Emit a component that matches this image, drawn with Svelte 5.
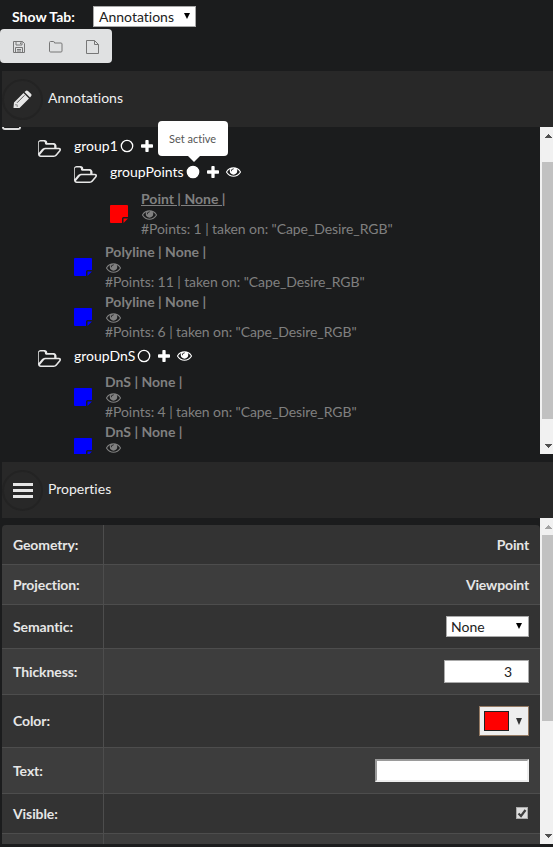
<script>
  const EYE = 'M1664 960q-152-236-381-353 61 104 61 225 0 185-131.500 316.500t-316.500 131.500-316.500-131.500-131.500-316.500q0-121 61-225-229 117-381 353 133 205 333.500 326.500t434.500 121.500 434.500-121.500 333.500-326.500zM944 576q0-20-14-34t-34-14q-125 0-214.500 89.500t-89.500 214.500q0 20 14 34t34 14 34-14 14-34q0-86 61-147t147-61q20 0 34-14t14-34zM1792 960q0 34-20 69-140 230-376.500 368.500t-499.500 138.500-499.500-139-376.500-368q-20-35-20-69t20-69q140-229 376.500-368t499.500-139 499.500 139 376.500 368q20 35 20 69z';
  const FOLDER = 'M1845 931q0-35-53-35h-1088q-40 0-85.500 21.500t-71.500 52.500l-294 363q-18 24-18 40 0 35 53 35h1088q40 0 86-22t71-53l294-363q18-22 18-39zM640 768h768v-160q0-40-28-68t-68-28h-576q-40 0-68-28t-28-68v-64q0-40-28-68t-68-28h-320q-40 0-68 28t-28 68v853l256-315q44-53 116-87.500t140-34.500zM1973 931q0 62-46 120l-295 363q-43 53-116 87.500t-140 34.500h-1088q-92 0-158-66t-66-158v-960q0-92 66-158t158-66h320q92 0 158 66t66 158v32h544q92 0 158 66t66 158v160h192q54 0 99 24.500t67 70.500q15 32 15 68z';
  const PLUS = 'M1600 736v192q0 40-28 68t-68 28h-416v416q0 40-28 68t-68 28h-192q-40 0-68-28t-28-68v-416h-416q-40 0-68-28t-28-68v-192q0-40 28-68t68-28h416v-416q0-40 28-68t68-28h192q40 0 68 28t28 68v416h416q40 0 68 28t28 68z';

  const tree = [
    {
      name: 'group1',
      groups: [{ name: 'groupPoints', active: true, items: [{ title: 'Point', points: 1, color: '#f00', selected: true }] }],
      items: [
        { title: 'Polyline', points: 11, color: '#00f' },
        { title: 'Polyline', points: 6, color: '#00f' }
      ]
    },
    {
      name: 'groupDnS',
      groups: [],
      items: [
        { title: 'DnS', points: 4, color: '#00f' },
        { title: 'DnS', points: 5, color: '#00f' }
      ]
    }
  ];
</script>

{#snippet eye()}
  <svg class="eye" viewBox="0 384 1792 1152"><path d={EYE} /></svg>
{/snippet}

{#snippet item(it)}
  <div class="item">
    <svg class="note" viewBox="0 0 18 18">
      <path fill={it.color} d="M1 0H17Q18 0 18 1V12H13.500Q12 12 12 13.500V18H1Q0 18 0 17V1Q0 0 1 0ZM13.500 13.500H18L13.500 18Z" />
    </svg>
    <div class="info">
      <div class="title" class:selected={it.selected}>{it.title} | None |</div>
      <div class="vis">{@render eye()}</div>
      <div class="desc">#Points: {it.points} | taken on: "Cape_Desire_RGB"</div>
    </div>
  </div>
{/snippet}

{#snippet group(g)}
  <div class="group">
    <div class="head">
      <svg class="folder" viewBox="64 128 1909 1408"><path d={FOLDER} /></svg>
      <span class="name">{g.name}</span>
      <span class="dot">
        <svg viewBox="0 0 14 14"><circle cx="7" cy="7" r="5.700" fill={g.active ? '#fff' : 'none'} stroke="#fff" stroke-width="1.300" /></svg>
        {#if g.active}<span class="tip">Set active</span>{/if}
      </span>
      <svg class="plus" viewBox="192 128 1408 1408"><path d={PLUS} /></svg>
      {@render eye()}
    </div>
    <div class="children">
      {#each g.groups ?? [] as sub}{@render group(sub)}{/each}
      {#each g.items as it}{@render item(it)}{/each}
    </div>
  </div>
{/snippet}

{#snippet arrow(up, dim)}
  <svg class="arr" viewBox="0 0 7 4" shape-rendering="crispEdges">
    <path fill={dim ? '#a3a3a3' : '#505050'} d={up ? 'M3 0h1v1h1v1h1v1h1v1H0V3h1V2h1V1h1z' : 'M0 0h7v1H6v1H5v1H4v1H3V3H2V2H1V1H0z'} />
  </svg>
{/snippet}

<main>
  <div class="top">
    <b>Show Tab:</b>
    <div class="select tab"><span>Annotations</span><i></i></div>
  </div>
  <div class="toolbar">
    <svg viewBox="0 0 14 14"><path d="M1.500 1.500H10.500L12.500 3.500V12.500H1.500ZM4 1.500V5H10V1.500M8.500 2.500V4M3.500 12.500V7.500H10.500V12.500M5 9.500H9M5 11H9" /></svg>
    <svg viewBox="0 0 14 14"><path d="M.5 11V2.500Q.5 1.500 1.500 1.500H4.500Q5.500 1.500 5.500 3H12Q13 3 13 4V11Q13 12 12 12H1.500Q.5 12 .5 11Z" /></svg>
    <svg viewBox="0 0 14 14"><path d="M.5.500H8.500L12.500 4.500V13.500H.5ZM8.500.5V4.500H12.500" /></svg>
  </div>

  <header class="first">
    <span class="ring">
      <svg class="pencil" viewBox="0 0 19 19">
        <path d="M1 12.500L10.500 3L16 8.500L6.500 18H1Q.5 18 .5 17.500ZM11.500 2L13 .7Q14 0 15 .9L18.200 4Q19 5 18.200 6L17 7.500Z" />
        <path d="M4 12.800L11.500 5.300" fill="none" stroke="#444" stroke-width=".9" />
        <path d="M2 14.800H4.200V17" fill="none" stroke="#777" stroke-width=".8" />
      </svg>
    </span>
    <span>Annotations</span>
  </header>

  <section class="treepane">
    <div class="scroller">
      <div class="tree">
        <div class="rootedge"></div>
        {#each tree as g}{@render group(g)}{/each}
      </div>
    </div>
    <div class="bar">
      {@render arrow(true, false)}
      <div class="thumb one"></div>
      {@render arrow(false, false)}
    </div>
  </section>

  <header class="second">
    <span class="ring"><svg class="menu" viewBox="0 0 20 15"><path d="M0 0h20v3H0zM0 6h20v3H0zM0 12h20v3H0z" /></svg></span>
    <span>Properties</span>
  </header>

  <section class="props">
    <div class="table">
      <div class="row r1"><span>Geometry:</span><div>Point</div></div>
      <div class="row r2"><span>Projection:</span><div>Viewpoint</div></div>
      <div class="row r3"><span>Semantic:</span><div><div class="select sem"><span>None</span><i></i></div></div></div>
      <div class="row r4"><span>Thickness:</span><div><div class="number">3</div></div></div>
      <div class="row r5"><span>Color:</span><div><div class="picker"><em></em><i></i></div></div></div>
      <div class="row r6"><span>Text:</span><div><div class="textbox"></div></div></div>
      <div class="row r7"><span>Visible:</span><div><div class="check">
        <svg viewBox="0 0 10 10"><path d="M1.500 5.500L4 8L8.500 2" fill="none" stroke="#404040" stroke-width="2.200" /></svg>
      </div></div></div>
      <div class="row r8"><span></span><div></div></div>
    </div>
    <div class="bar">
      {@render arrow(true, true)}
      <div class="thumb two"></div>
      {@render arrow(false, false)}
    </div>
  </section>
</main>

<style>
  :global(body) { background: #fff; }
  main {
    width: 553px; height: 847px; overflow: hidden; box-sizing: border-box;
    background: #1b1c1d; color: #fff;
    font: 14px/20px Lato, "Noto Sans", sans-serif;
    font-variant-ligatures: none;
    display: flex; flex-direction: column;
  }
  svg { display: block; flex: none; fill: currentColor; }
  .top { height: 29px; flex: none; display: flex; align-items: flex-start; padding: 6px 0 0 12px; box-sizing: border-box; }
  .top b { width: 81px; line-height: 22px; }
  .select {
    box-sizing: border-box; background: #fff; color: #222; border: 1px solid #a9a9a9; height: 21px;
    display: flex; align-items: center; justify-content: space-between; padding: 0 5px; line-height: 19px;
  }
  .select i { border: 3.500px solid transparent; border-top: 6px solid #000; border-bottom: 0; margin-top: -2px; }
  .tab { width: 103px; }
  .sem { width: 83px; padding: 0 6px 0 4px; }
  .toolbar {
    width: 112px; height: 34px; flex: none; background: #e0e1e2; border-radius: 4px;
    display: flex; align-items: center; gap: 23px; padding-left: 12px; box-sizing: border-box; margin-bottom: 8px;
  }
  .toolbar svg { width: 14px; height: 14px; fill: none; stroke: #777; stroke-width: 1; position: relative; top: 1px; }
  header {
    height: 56px; flex: none; margin-left: 2px; background: #282828; color: #f0f0f0;
    display: flex; align-items: center; gap: 5px; line-height: 20px;
  }
  header > span:last-child { position: relative; top: -1px; }
  .ring { width: 41px; height: 41px; border: 2px solid #232323; border-radius: 50%; display: flex; align-items: center; justify-content: center; box-sizing: border-box; color: #e6e6e6; }
  .pencil { width: 19px; height: 19px; }
  .menu { width: 20px; height: 15px; }
  .treepane { height: 327px; flex: none; display: flex; margin-bottom: 8px; }
  .scroller { width: 540px; height: 327px; clip-path: inset(-20px 0 0 0); }
  .tree { height: 327px; padding-left: 2px; }
  .rootedge { width: 19px; height: 3px; box-sizing: border-box; border: 2px solid #ddd; border-top: 0; border-radius: 0 0 3px 3px; margin-bottom: 3px; }
  .group { padding-left: 36px; }
  .tree > .group + .group { margin-top: 1px; }
  .head { height: 26px; display: flex; align-items: center; }
  .folder { width: 23px; height: 17px; color: #e8e8e8; position: relative; top: 2px; margin-right: 13px; }
  .dot { position: relative; width: 14px; height: 14px; margin: 0 7px 0 2px; }
  .plus { width: 12px; height: 12px; margin-right: 7px; }
  .eye { width: 15px; height: 10px; }
  .item { height: 50px; display: flex; padding-left: 36px; color: #808080; }
  .group > .children { padding-top: 3px; }
  .children .group { margin-top: -3px; padding-bottom: 3px; }
  .children .group .children { padding-top: 4px; }
  .note { width: 18px; height: 18px; margin: 16px 13px 0 0; }
  .info { height: 50px; white-space: nowrap; }
  .title { font-weight: 700; height: 20px; line-height: 20px; }
  .selected { text-decoration: underline; }
  .vis { height: 10px; display: flex; align-items: center; padding-left: 1px; margin-top: 1px; }
  .desc { height: 18px; line-height: 18px; letter-spacing: -.08px; }
  .tip {
    position: absolute; left: -28px; top: -44px; z-index: 5; width: 70px; height: 35px; box-sizing: border-box;
    background: #fff; color: #555; border-radius: 4px; font-size: 11px; line-height: 35px; text-align: center; white-space: nowrap;
  }
  .tip::after { content: ''; position: absolute; left: 30px; top: 35px; border: 6px solid transparent; border-top-color: #fff; border-bottom: 0; }
  .bar { width: 13px; background: #f1f1f1; box-sizing: border-box; display: flex; flex-direction: column; align-items: flex-end; padding: 7px 0 6px; }
  .arr { width: 7px; height: 4px; margin-right: 1px; }
  .thumb { width: 11px; background: #c1c1c1; margin-bottom: auto; }
  .one { height: 257px; margin-top: 24px; }
  .two { height: 186px; margin-top: 6px; }
  .props { height: 326px; flex: none; display: flex; }
  .table { width: 538px; margin: 7px 0 0 2px; border-radius: 4px 4px 0 0; overflow: hidden; color: #e6e6e6; }
  .row { display: flex; box-sizing: border-box; border-bottom: 1px solid #4d4d4d; background: #333; }
  .row:nth-child(even) { background: #3d3d3d; }
  .row > span { width: 102px; box-sizing: border-box; border-right: 1px solid #4d4d4d; padding-left: 11px; font-weight: 700; letter-spacing: -.1px; display: flex; align-items: center; }
  .row > div { flex: 1; display: flex; align-items: center; justify-content: flex-end; padding-right: 11px; font-weight: 700; letter-spacing: -.15px; }
  .row .select, .number { font-weight: 400; letter-spacing: 0; }
  .r1 { height: 40px; } .r2 { height: 40px; } .r3 { height: 44px; } .r4 { height: 46px; }
  .r5 { height: 53px; } .r6 { height: 46px; } .r7 { height: 40px; } .r8 { height: 11px; border: 0; }
  .number { width: 85px; height: 23px; box-sizing: border-box; border: 1px solid #aaa; background: #fff; color: #222; text-align: right; padding-right: 16px; line-height: 22px; }
  .picker { width: 50px; height: 30px; box-sizing: border-box; border: 1px solid #957b64; background: #eee; display: flex; align-items: center; padding: 0 6px 0 4px; justify-content: space-between; }
  .picker em { width: 25px; height: 20px; box-sizing: border-box; border: 1px solid #222; background: #f00; }
  .picker i { border: 3.500px solid transparent; border-top: 7px solid #333; border-bottom: 0; }
  .textbox { width: 154px; height: 23px; box-sizing: border-box; border: 2px solid; border-color: #9a9a9a #eee #eee #9a9a9a; background: #fff; }
  .check { width: 12px; height: 12px; box-sizing: border-box; border: 1px solid #aaa; background: #dedede; margin-right: 1px; position: relative; top: -1px; }
  .check svg { width: 10px; height: 10px; }
</style>
